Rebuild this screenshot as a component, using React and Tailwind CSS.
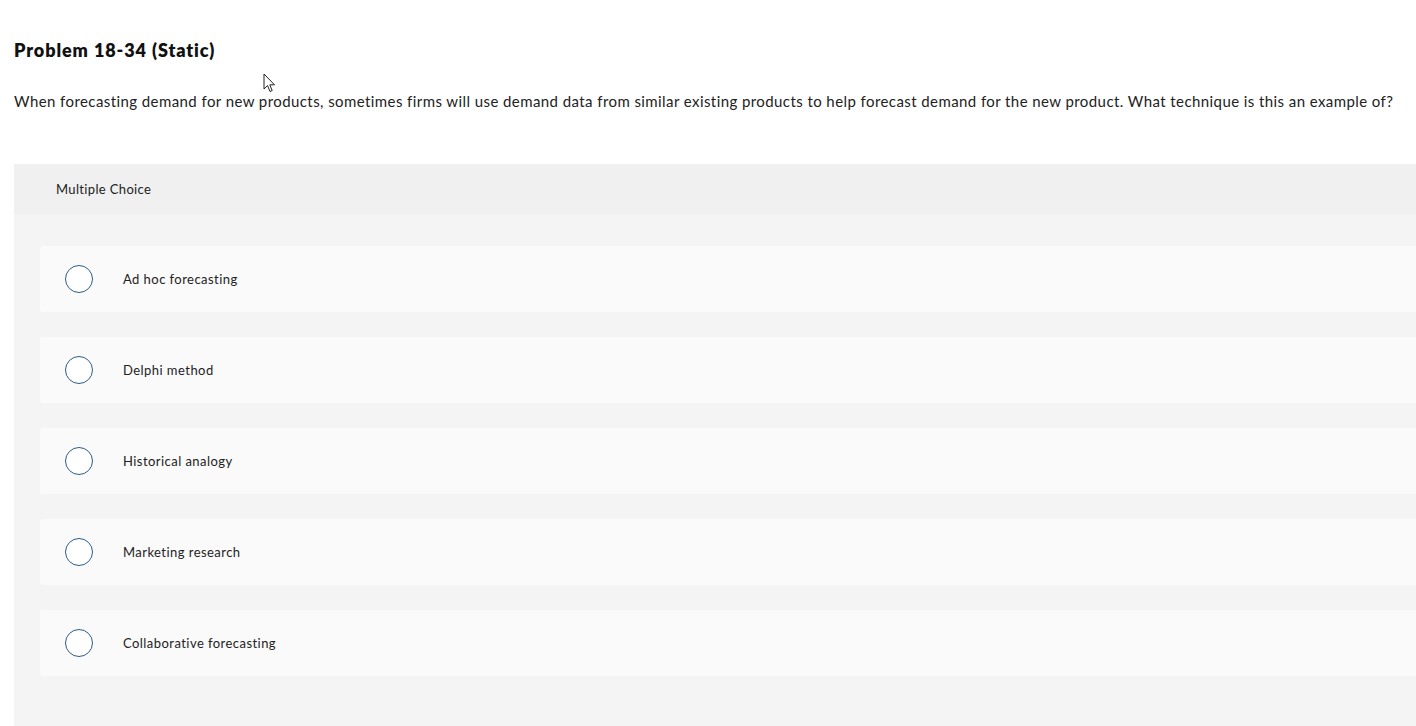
import React from "react";

const options = [
  "Ad hoc forecasting",
  "Delphi method",
  "Historical analogy",
  "Marketing research",
  "Collaborative forecasting",
];

export default function App() {
  return (
    <div className="relative min-h-[726px] w-full overflow-hidden bg-white text-[#1a1a1a]" style={{ fontFamily: "Lato, 'Open Sans', sans-serif" }}>
      <div className="pl-[14px] pt-[38px]">
        <h1 className="text-[18px] font-extrabold leading-[24px] tracking-[0.9px] text-[#111]">Problem 18-34 (Static)</h1>
        <p className="mt-[29px] text-[15px] leading-[20px] tracking-[0.42px] text-[#222] whitespace-nowrap">
          When forecasting demand for new products, sometimes firms will use demand data from similar existing products to help forecast demand for the new product. What technique is this an example of?
        </p>
        <div className="mt-[53px] bg-[#f4f4f4] pb-[50px]">
          <div className="flex h-[50px] items-center bg-[#f0f0f0] pl-[42px] pt-[2px] text-[13px] tracking-[0.35px] text-[#222]">
            Multiple Choice
          </div>
          <div className="flex flex-col gap-[25px] pl-[26px] pt-[32px]">
            {options.map((o) => (
              <div key={o} className="flex h-[66px] items-center rounded-l-[3px] bg-[#fafafa]">
                <span className="ml-[25px] box-border h-[28px] w-[28px] rounded-full border-[1.5px] border-[#2d5b88] bg-white" />
                <span className="ml-[30px] mt-[2px] text-[13px] tracking-[0.45px] text-[#222]">{o}</span>
              </div>
            ))}
          </div>
        </div>
      </div>
      <svg className="absolute left-[263px] top-[73px]" width="13" height="20" viewBox="0 0 13 20">
        <path d="M1 1 L1 16 L4.5 12.5 L7 18.5 L9.2 17.6 L6.8 11.8 L11.5 11.8 Z" fill="white" stroke="#222" strokeWidth="1" strokeLinejoin="round" />
      </svg>
    </div>
  );
}
